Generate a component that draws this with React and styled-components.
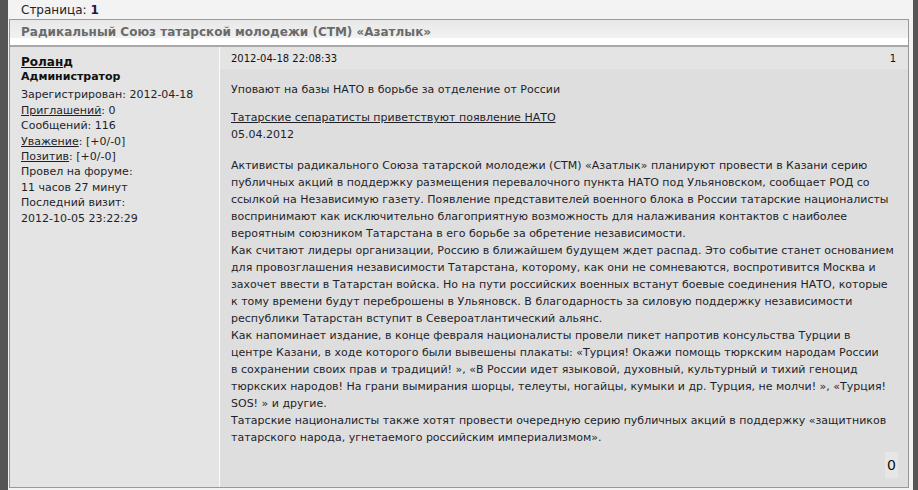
import React from "react";
import styled, { createGlobalStyle } from "styled-components";

const GlobalStyle = createGlobalStyle`
  html, body {
    margin: 0;
    padding: 0;
    background: #f2f2f2;
  }
  body {
    font-family: "DejaVu Sans", Verdana, sans-serif;
    font-size: 11px;
    color: #1f1f2a;
  }
`;

const Frame = styled.div`
  box-sizing: border-box;
  height: 490px;
  border-left: 8px solid #555;
  border-right: 5px solid #555;
  padding: 0 4px 0 1px;
  background: #f3f3f3;
  overflow: hidden;
`;

const Pager = styled.div`
  height: 19px;
  line-height: 20px;
  padding-left: 12px;
  font-size: 12px;
  color: #222;

  strong {
    color: #1a1a40;
  }
`;

const Topic = styled.div`
  border: 1px solid #999;
  background: #fff;
`;

const TopicTitle = styled.div`
  height: 25px;
  line-height: 25px;
  padding-left: 11px;
  font-size: 12px;
  font-weight: bold;
  color: #6a6a6a;
  background: linear-gradient(#e8e8e8 0%, #f1f1f1 70%, #fff 71%, #fff 100%);
  border-bottom: 2px solid #a8a8a8;
`;

const Post = styled.div`
  display: flex;
  height: 440px;
`;

const Author = styled.div`
  box-sizing: border-box;
  width: 210px;
  flex: none;
  padding: 8px 10px 0 11px;
  background: #e4e4e4;
  border-right: 1px solid #fafafa;
  line-height: 15.4px;
`;

const AuthorName = styled.a`
  display: block;
  font-size: 12px;
  font-weight: bold;
  color: #111;
  text-decoration: underline;
  line-height: 14px;
`;

const AuthorRole = styled.div`
  font-weight: bold;
  color: #111;
  margin-bottom: 3px;
`;

const InfoLink = styled.span`
  text-decoration: underline;
`;

const Message = styled.div`
  flex: 1;
  display: flex;
  flex-direction: column;
  background: #dedede;
`;

const MessageHead = styled.div`
  display: flex;
  justify-content: space-between;
  align-items: center;
  height: 22px;
  padding: 0 12px 0 11px;
  background: #e4e4e4;
  font-size: 10px;
  color: #111;
`;

const MessageBody = styled.div`
  flex: 1;
  position: relative;
  padding: 12px 6px 0 11px;
  line-height: 17px;
  white-space: nowrap;
`;

const Para = styled.p`
  margin: 0 0 ${(p) => p.gap || 11}px;
`;

const Source = styled.a`
  color: #1f1f2a;
  text-decoration: underline;
`;

const Rating = styled.div`
  position: absolute;
  right: 10px;
  bottom: 9px;
  padding: 4px 2px;
  background: #e6e6e6;
  font-size: 14px;
  line-height: 18px;
  color: #111;
`;

const article = [
  "Активисты радикального Союза татарской молодежи (СТМ) «Азатлык» планируют провести в Казани серию",
  "публичных акций в поддержку размещения перевалочного пункта НАТО под Ульяновском, сообщает РОД со",
  "ссылкой на Независимую газету. Появление представителей военного блока в России татарские националисты",
  "воспринимают как исключительно благоприятную возможность для налаживания контактов с наиболее",
  "вероятным союзником Татарстана в его борьбе за обретение независимости.",
  "Как считают лидеры организации, Россию в ближайшем будущем ждет распад. Это событие станет основанием",
  "для провозглашения независимости Татарстана, которому, как они не сомневаются, воспротивится Москва и",
  "захочет ввести в Татарстан войска. Но на пути российских военных встанут боевые соединения НАТО, которые",
  "к тому времени будут переброшены в Ульяновск. В благодарность за силовую поддержку независимости",
  "республики Татарстан вступит в Североатлантический альянс.",
  "Как напоминает издание, в конце февраля националисты провели пикет напротив консульства Турции в",
  "центре Казани, в ходе которого были вывешены плакаты: «Турция! Окажи помощь тюркским народам России",
  "в сохранении своих прав и традиций! », «В России идет языковой, духовный, культурный и тихий геноцид",
  "тюркских народов! На грани вымирания шорцы, телеуты, ногайцы, кумыки и др. Турция, не молчи! », «Турция!",
  "SOS! » и другие.",
  "Татарские националисты также хотят провести очередную серию публичных акций в поддержку «защитников",
  "татарского народа, угнетаемого российским империализмом».",
];

export default function App() {
  return (
    <>
      <GlobalStyle />
      <Frame>
        <Pager>
          Страница: <strong>1</strong>
        </Pager>
        <Topic>
          <TopicTitle>Радикальный Союз татарской молодежи (СТМ) «Азатлык»</TopicTitle>
          <Post>
            <Author>
              <AuthorName href="#">Роланд</AuthorName>
              <AuthorRole>Администратор</AuthorRole>
              Зарегистрирован: 2012-04-18
              <br />
              <InfoLink>Приглашений</InfoLink>: 0
              <br />
              Сообщений: 116
              <br />
              <InfoLink>Уважение</InfoLink>: [+0/-0]
              <br />
              <InfoLink>Позитив</InfoLink>: [+0/-0]
              <br />
              Провел на форуме:
              <br />
              11 часов 27 минут
              <br />
              Последний визит:
              <br />
              2012-10-05 23:22:29
            </Author>
            <Message>
              <MessageHead>
                <span>2012-04-18 22:08:33</span>
                <span>1</span>
              </MessageHead>
              <MessageBody>
                <Para>Уповают на базы НАТО в борьбе за отделение от России</Para>
                <Para gap={14}>
                  <Source href="#">Татарские сепаратисты приветствуют появление НАТО</Source>
                  <br />
                  05.04.2012
                </Para>
                <Para>
                  {article.map((line, i) => (
                    <React.Fragment key={i}>
                      {line}
                      <br />
                    </React.Fragment>
                  ))}
                </Para>
                <Rating>0</Rating>
              </MessageBody>
            </Message>
          </Post>
        </Topic>
      </Frame>
    </>
  );
}
